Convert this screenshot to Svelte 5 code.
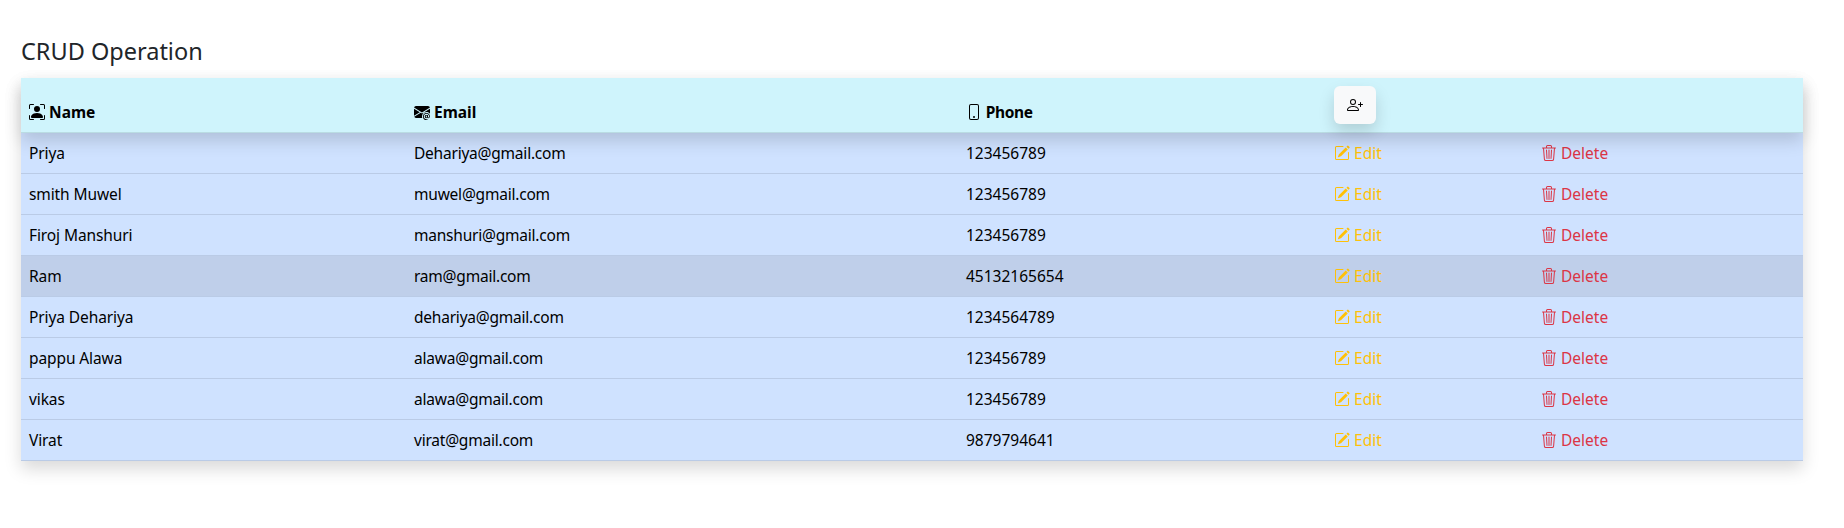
<script>
  const users = [
    { name: "Priya", email: "Dehariya@gmail.com", phone: "123456789" },
    { name: "smith Muwel", email: "muwel@gmail.com", phone: "123456789" },
    { name: "Firoj Manshuri", email: "manshuri@gmail.com", phone: "123456789" },
    { name: "Ram", email: "ram@gmail.com", phone: "45132165654", hover: true },
    { name: "Priya Dehariya", email: "dehariya@gmail.com", phone: "1234564789" },
    { name: "pappu Alawa", email: "alawa@gmail.com", phone: "123456789" },
    { name: "vikas", email: "alawa@gmail.com", phone: "123456789" },
    { name: "Virat", email: "virat@gmail.com", phone: "9879794641" },
  ];
</script>

<div class="page">
  <h4>CRUD Operation</h4>
  <div class="table-wrap">
    <table>
      <colgroup>
        <col class="c-name" />
        <col class="c-email" />
        <col class="c-phone" />
        <col class="c-edit" />
        <col />
      </colgroup>
      <thead>
        <tr>
          <th>
            <svg class="icon" viewBox="0 0 16 16" fill="currentColor">
              <path d="M1.5 1a.5.5 0 0 0-.5.5v3a.5.5 0 0 1-1 0v-3A1.5 1.5 0 0 1 1.5 0h3a.5.5 0 0 1 0 1h-3zM11 .5a.5.5 0 0 1 .5-.5h3A1.5 1.5 0 0 1 16 1.5v3a.5.5 0 0 1-1 0v-3a.5.5 0 0 0-.5-.5h-3a.5.5 0 0 1-.5-.5zM.5 11a.5.5 0 0 1 .5.5v3a.5.5 0 0 0 .5.5h3a.5.5 0 0 1 0 1h-3A1.5 1.5 0 0 1 0 14.5v-3a.5.5 0 0 1 .5-.5zm15 0a.5.5 0 0 1 .5.5v3a1.5 1.5 0 0 1-1.5 1.5h-3a.5.5 0 0 1 0-1h3a.5.5 0 0 0 .5-.5v-3a.5.5 0 0 1 .5-.5z" />
              <path d="M3 14s-1 0-1-1 1-4 6-4 6 3 6 4-1 1-1 1H3zm8-9a3 3 0 1 1-6 0 3 3 0 0 1 6 0z" />
            </svg>
            Name
          </th>
          <th>
            <svg class="icon" viewBox="0 0 16 16" fill="currentColor">
              <path d="M2 2A2 2 0 0 0 .05 3.555L8 8.414l7.95-4.859A2 2 0 0 0 14 2H2Zm-2 9.8V4.698l5.803 3.546L0 11.801Zm6.761-2.97-6.57 4.026A2 2 0 0 0 2 14h6.256A4.493 4.493 0 0 1 8 12.5a4.49 4.49 0 0 1 1.606-3.446l-.367-.225L8 9.586l-1.239-.757ZM16 9.671V4.697l-5.803 3.546.338.208A4.482 4.482 0 0 1 12.5 8c1.414 0 2.675.652 3.5 1.671Z" />
              <path d="M15.834 12.244c0 1.168-.577 2.025-1.587 2.025-.503 0-1.002-.228-1.12-.648h-.043c-.118.416-.543.643-1.015.643-.77 0-1.259-.542-1.259-1.434v-.529c0-.844.481-1.4 1.26-1.4.585 0 .87.333.953.63h.03v-.568h.905v2.19c0 .272.18.42.411.42.315 0 .639-.415.639-1.39v-.118c0-1.277-.95-2.326-2.484-2.326h-.02c-1.582 0-2.64 1.067-2.64 2.724v.157c0 1.867 1.237 2.654 2.57 2.654h.045c.507 0 .935-.07 1.18-.18v.731c-.219.1-.643.175-1.237.175h-.044C10.438 16 9 14.82 9 12.646v-.214C9 10.36 10.421 9 12.485 9h.035c2.12 0 3.314 1.43 3.314 3.034v.21Zm-4.04.21v.227c0 .586.227.8.581.8.31 0 .564-.17.564-.743v-.367c0-.516-.275-.708-.572-.708-.346 0-.573.245-.573.791Z" />
            </svg>
            Email
          </th>
          <th class="phone-head">
            <svg class="icon" viewBox="0 0 16 16" fill="currentColor">
              <path d="M11 1a1 1 0 0 1 1 1v12a1 1 0 0 1-1 1H5a1 1 0 0 1-1-1V2a1 1 0 0 1 1-1h6zM5 0a2 2 0 0 0-2 2v12a2 2 0 0 0 2 2h6a2 2 0 0 0 2-2V2a2 2 0 0 0-2-2H5z" />
              <path d="M8 14a1 1 0 1 0 0-2 1 1 0 0 0 0 2z" />
            </svg>
            Phone
          </th>
          <th>
            <button class="add" aria-label="Add user">
              <svg class="icon" viewBox="0 0 16 16" fill="currentColor">
                <path d="M6 8a3 3 0 1 0 0-6 3 3 0 0 0 0 6zm2-3a2 2 0 1 1-4 0 2 2 0 0 1 4 0zm4 8c0 1-1 1-1 1H1s-1 0-1-1 1-4 6-4 6 3 6 4zm-1-.004c-.001-.246-.154-.986-.832-1.664C9.516 10.68 8.289 10 6 10c-2.29 0-3.516.68-4.168 1.332-.678.678-.83 1.418-.832 1.664h10z" />
                <path d="M13.5 5a.5.5 0 0 1 .5.5V7h1.5a.5.5 0 0 1 0 1H14v1.5a.5.5 0 0 1-1 0V8h-1.5a.5.5 0 0 1 0-1H13V5.5a.5.5 0 0 1 .5-.5z" />
              </svg>
            </button>
          </th>
          <th></th>
        </tr>
      </thead>
      <tbody>
        {#each users as u}
          <tr class:hover={u.hover}>
            <td class="name">{u.name}</td>
            <td class="email">{u.email}</td>
            <td>{u.phone}</td>
            <td class="edit">
              <svg class="icon" viewBox="0 0 16 16" fill="currentColor">
                <path d="M15.502 1.94a.5.5 0 0 1 0 .706L14.459 3.69l-2-2L13.502.646a.5.5 0 0 1 .707 0l1.293 1.293zm-1.75 2.456-2-2L4.939 9.21a.5.5 0 0 0-.121.196l-.805 2.414a.25.25 0 0 0 .316.316l2.414-.805a.5.5 0 0 0 .196-.12l6.813-6.814z" />
                <path fill-rule="evenodd" d="M1 13.5A1.5 1.5 0 0 0 2.5 15h11a1.5 1.5 0 0 0 1.5-1.5v-6a.5.5 0 0 0-1 0v6a.5.5 0 0 1-.5.5h-11a.5.5 0 0 1-.5-.5v-11a.5.5 0 0 1 .5-.5H9a.5.5 0 0 0 0-1H2.5A1.5 1.5 0 0 0 1 2.5v11z" />
              </svg>
              Edit
            </td>
            <td class="delete">
              <svg class="icon" viewBox="0 0 16 16" fill="currentColor">
                <path d="M6.5 1h3a.5.5 0 0 1 .5.5v1H6v-1a.5.5 0 0 1 .5-.5ZM11 2.5v-1A1.5 1.5 0 0 0 9.5 0h-3A1.5 1.5 0 0 0 5 1.5v1H2.506a.58.58 0 0 0-.01 0H1.5a.5.5 0 0 0 0 1h.538l.853 10.66A2 2 0 0 0 4.885 16h6.23a2 2 0 0 0 1.994-1.84l.853-10.66h.538a.5.5 0 0 0 0-1h-.995a.59.59 0 0 0-.01 0H11Zm1.958 1-.846 10.58a1 1 0 0 1-.997.92h-6.23a1 1 0 0 1-.997-.92L3.042 3.5h9.916Zm-7.487 1a.5.5 0 0 1 .528.47l.5 8.5a.5.5 0 0 1-.998.06L5 5.03a.5.5 0 0 1 .47-.53Zm5.058 0a.5.5 0 0 1 .47.53l-.5 8.5a.5.5 0 1 1-.998-.06l.5-8.5a.5.5 0 0 1 .528-.47ZM8 4.5a.5.5 0 0 1 .5.5v8.5a.5.5 0 0 1-1 0V5a.5.5 0 0 1 .5-.5Z" />
              </svg>
              Delete
            </td>
          </tr>
        {/each}
      </tbody>
    </table>
  </div>
</div>

<style>
  :global(body) {
    background: #fff;
    color: #212529;
    font-family: "Noto Sans", sans-serif;
    font-size: 15.5px;
  }
  .page {
    padding: 37px 41px 67px 21px;
  }
  h4 {
    margin: 0 0 12px;
    font-size: 23.5px;
    font-weight: 400;
    line-height: 29px;
  }
  .table-wrap {
    box-shadow: 0 8px 16px rgba(0, 0, 0, 0.15);
  }
  table {
    width: 100%;
    table-layout: fixed;
    border-collapse: separate;
    border-spacing: 0;
  }
  .c-name {
    width: 385px;
  }
  .c-email {
    width: 552px;
  }
  .c-phone {
    width: 368px;
  }
  .c-edit {
    width: 207px;
  }
  thead {
    position: relative;
    z-index: 1;
    background: #cff4fc;
    box-shadow: 0 8px 16px rgba(0, 0, 0, 0.15);
  }
  th {
    padding: 8px;
    height: 38px;
    box-sizing: content-box;
    text-align: left;
    vertical-align: bottom;
    font-weight: 700;
    color: #000;
    line-height: 24px;
    border-bottom: 1px solid #badce3;
  }
  .phone-head {
    letter-spacing: -0.35px;
  }
  tbody {
    background: #cfe2ff;
  }
  td {
    padding: 8px;
    height: 24px;
    box-sizing: content-box;
    line-height: 24px;
    color: #000;
    border-bottom: 1px solid #bacbe6;
    white-space: nowrap;
  }
  tr.hover {
    background: #bfcfea;
  }
  td.name {
    letter-spacing: -0.1px;
  }
  td.email {
    letter-spacing: -0.22px;
  }
  td.edit {
    color: #ffc107;
  }
  td.delete {
    color: #dc3545;
  }
  .icon {
    width: 16px;
    height: 16px;
    vertical-align: -2px;
  }
  .add {
    display: flex;
    align-items: center;
    justify-content: center;
    width: 42px;
    height: 38px;
    padding: 0;
    border: 0;
    border-radius: 6px;
    background: #f8f9fa;
    color: #000;
    box-shadow: 0 8px 16px rgba(0, 0, 0, 0.15);
  }
</style>
